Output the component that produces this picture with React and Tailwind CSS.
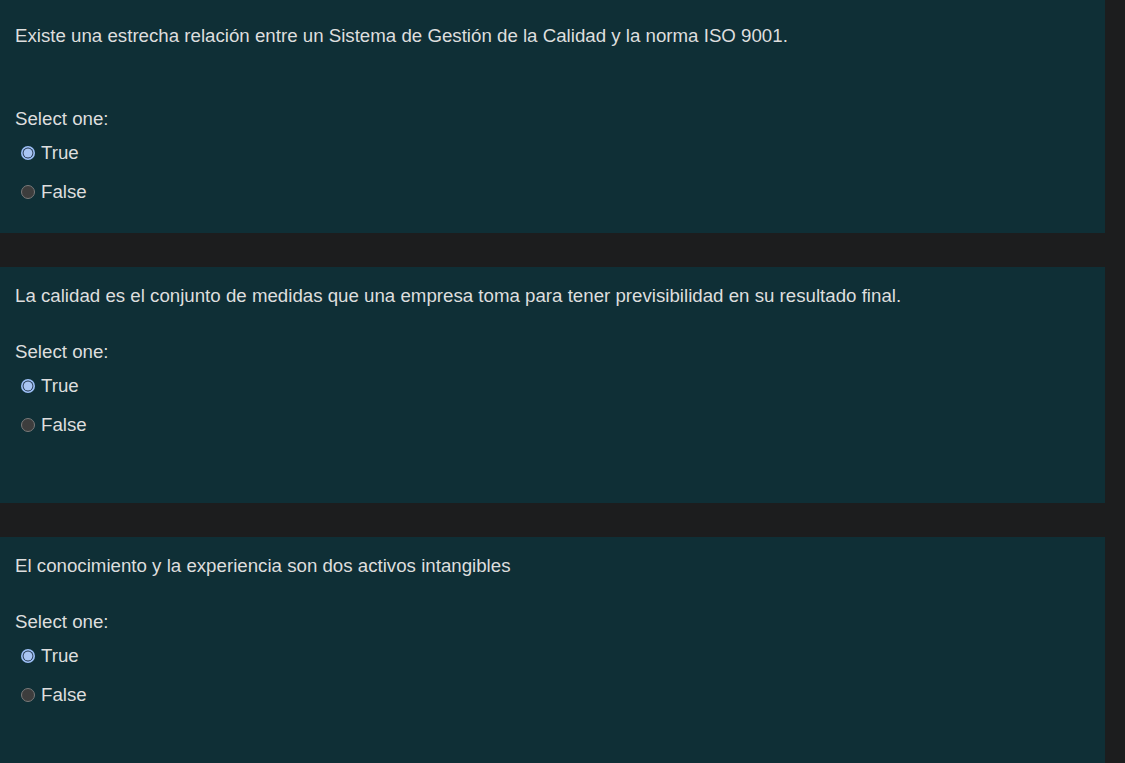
import React from 'react';

const questions = [
  {
    id: 1,
    text: 'Existe una estrecha relación entre un Sistema de Gestión de la Calidad y la norma ISO 9001.',
    pad: 'pt-[24px]',
    gap: 'mt-[59px]',
    height: 'h-[233px]',
  },
  {
    id: 2,
    text: 'La calidad es el conjunto de medidas que una empresa toma para tener previsibilidad en su resultado final.',
    pad: 'pt-[17px]',
    gap: 'mt-[32px]',
    height: 'h-[236px]',
  },
  {
    id: 3,
    text: 'El conocimiento y la experiencia son dos activos intangibles',
    pad: 'pt-[17px]',
    gap: 'mt-[32px]',
    height: 'h-[260px]',
  },
];

const Radio = ({ checked }) => (
  <svg viewBox="0 0 14 14" className="w-[14px] h-[14px] shrink-0 block">
    {checked ? (
      <>
        <circle cx="7" cy="7" r="7" fill="#9ec0f7" />
        <circle cx="7" cy="7" r="5.4" fill="#1d2f45" />
        <circle cx="7" cy="7" r="4.5" fill="#a9c5f3" />
      </>
    ) : (
      <circle cx="7" cy="7" r="6.5" fill="#3d3d3d" stroke="#7a7a7a" strokeWidth="1" />
    )}
  </svg>
);

const Option = ({ label, checked }) => (
  <label className="flex items-center h-[24px] pl-[6px]">
    <Radio checked={checked} />
    <span className="ml-[6px]">{label}</span>
  </label>
);

export default function App() {
  return (
    <div
      className="flex w-full h-[763px] overflow-hidden bg-[#1c1d1e] text-[18.7px] leading-[24px] text-[#dedede]"
      style={{ fontFamily: '"Liberation Sans", Arial, sans-serif' }}
    >
      <div className="w-[1105px] flex flex-col gap-[34px]">
        {questions.map(q => (
          <div key={q.id} className={`bg-[#0f2f36] px-[15px] shrink-0 ${q.pad} ${q.height}`}>
            <p>{q.text}</p>
            <p className={q.gap}>Select one:</p>
            <div className="mt-[10px] flex flex-col gap-[15px]">
              <Option label="True" checked />
              <Option label="False" />
            </div>
          </div>
        ))}
      </div>
    </div>
  );
}
